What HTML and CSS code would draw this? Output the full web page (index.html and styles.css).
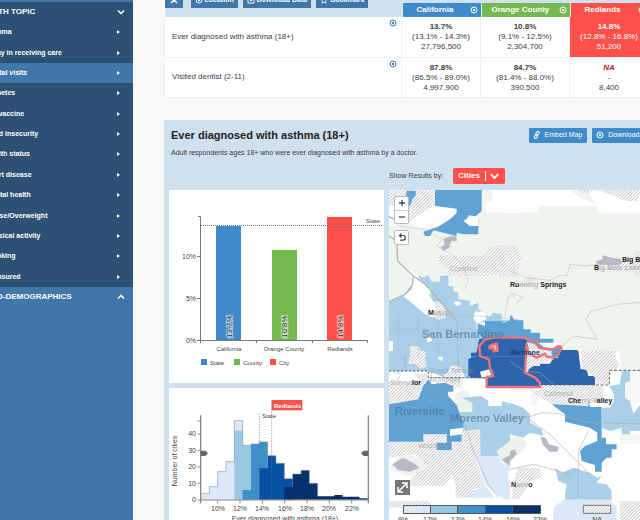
FILE: index.html
```html
<!DOCTYPE html>
<html lang="en">
<head>
<meta charset="utf-8">
<title>Health topics</title>
<link rel="stylesheet" href="styles.css">
</head>
<body>
<svg class="defs" aria-hidden="true">
  <defs>
    <pattern id="hatch" width="7" height="7" patternUnits="userSpaceOnUse" patternTransform="rotate(45)">
      <rect width="7" height="7" fill="#fbfbfb"/><rect width="2" height="7" fill="#bcbcbc"/>
    </pattern>
    <symbol id="target" viewBox="0 0 8 8"><circle cx="4" cy="4" r="3" fill="none" stroke="currentColor"/><circle cx="4" cy="4" r="1.2" fill="currentColor"/></symbol>
    <symbol id="close" viewBox="0 0 8 8"><circle cx="4" cy="4" r="3" fill="none" stroke="currentColor"/><path d="M2.8 2.8l2.4 2.4M5.2 2.8L2.8 5.2" stroke="currentColor"/></symbol>
    <symbol id="down" viewBox="0 0 8 8"><path d="M1 2.5l3 3 3-3" fill="none" stroke="currentColor" stroke-width="1.5"/></symbol>
    <symbol id="up" viewBox="0 0 8 8"><path d="M1 5.5l3-3 3 3" fill="none" stroke="currentColor" stroke-width="1.5"/></symbol>
  </defs>
</svg>
<div class="page">
  <nav class="sidebar">
    <button class="group group-open" type="button">HEALTH TOPIC <svg class="icon"><use href="#down"/></svg></button>
    <ul class="topics">
      <li><a href="#">Asthma</a></li>
      <li><a href="#">Delay in receiving care</a></li>
      <li><a class="active" href="#">Dental visits</a></li>
      <li><a href="#">Diabetes</a></li>
      <li><a href="#">Flu vaccine</a></li>
      <li><a href="#">Food insecurity</a></li>
      <li><a href="#">Health status</a></li>
      <li><a href="#">Heart disease</a></li>
      <li><a href="#">Mental health</a></li>
      <li><a href="#">Obese/Overweight</a></li>
      <li><a href="#">Physical activity</a></li>
      <li><a href="#">Smoking</a></li>
      <li><a href="#">Uninsured</a></li>
    </ul>
    <button class="group" type="button">SOCIO-DEMOGRAPHICS <svg class="icon"><use href="#up"/></svg></button>
  </nav>

  <main class="main">
    <table class="compare">
      <thead>
        <tr>
          <th class="tools-cell">
            <div class="tools">
              <button class="tool tool-icon" type="button" aria-label="Expand"><svg class="icon"><path d="M4 0v4M1 7l3-3 3 3" fill="none" stroke="currentColor" stroke-width="1.5"/></svg></button>
              <button class="tool" type="button"><svg class="icon"><use href="#target"/></svg>Location</button>
              <button class="tool" type="button"><svg class="icon"><path d="M1 4v3h6V4M4 0v5M2 3l2 2 2-2" fill="none" stroke="currentColor"/></svg>Download Data</button>
              <button class="tool" type="button"><svg class="icon"><path d="M4 1l1 2 2 .4-1.500 1.500.5 2.300L4 6 2 7.200l.5-2.300L1 3.400 3 3z" fill="none" stroke="currentColor" stroke-width=".8"/></svg>Bookmark</button>
            </div>
          </th>
          <th class="place"><div class="head state">California<svg class="icon"><use href="#close"/></svg></div></th>
          <th class="place wide"><div class="head county">Orange County<svg class="icon"><use href="#close"/></svg></div></th>
          <th class="place"><div class="head city">Redlands<svg class="icon"><use href="#close"/></svg></div></th>
        </tr>
      </thead>
      <tbody>
        <tr>
          <td class="topic"><div class="topic-row">Ever diagnosed with asthma (18+)<svg class="icon"><use href="#target"/></svg></div></td>
          <td><b>13.7%</b><br>(13.1% - 14.3%)<br>27,796,500</td>
          <td><b>10.8%</b><br>(9.1% - 12.5%)<br>2,304,700</td>
          <td class="city"><b>14.8%</b><br>(12.8% - 16.8%)<br>51,200</td>
        </tr>
        <tr>
          <td class="topic"><div class="topic-row">Visited dentist (2-11)<svg class="icon"><use href="#target"/></svg></div></td>
          <td><b>87.8%</b><br>(86.5% - 89.0%)<br>4,997,900</td>
          <td><b>84.7%</b><br>(81.4% - 88.0%)<br>390,500</td>
          <td><b class="na">NA</b><br>-<br>8,400</td>
        </tr>
      </tbody>
    </table>

    <section class="panel">
      <header class="panel-head">
        <h1>Ever diagnosed with asthma (18+)</h1>
        <div class="actions">
          <button class="action" type="button"><svg class="icon"><g fill="none" stroke="currentColor"><rect x="3.500" y=".5" width="2.500" height="4" rx="1.200" transform="rotate(35 5 2)"/><rect x="2" y="3.500" width="2.500" height="4" rx="1.200" transform="rotate(35 3 5)"/></g></svg>Embed Map</button>
          <button class="action" type="button"><svg class="icon"><use href="#target"/></svg>Download Map</button>
        </div>
      </header>
      <p class="lead">Adult respondents ages 18+ who were ever diagnosed with asthma by a doctor.</p>
      <div class="filter">
        <label for="level">Show Results by:</label>
        <div class="picker">
          <select id="level"><option>Cities</option><option>Counties</option></select>
          <svg class="icon"><use href="#down"/></svg>
        </div>
      </div>

      <div class="views">
        <div class="charts">
          <div class="card">
            <svg class="bars" role="img" aria-label="Rate by area">
              <rect x="47" y="36" width="25" height="114" fill="#3f8acb"/>
              <rect x="103" y="60" width="25" height="90" fill="#76b94f"/>
              <rect x="158" y="27" width="25" height="123" fill="#ff5149"/>
              <path d="M32 35.500H213" stroke="#777" stroke-dasharray="1 1"/>
              <path d="M29 26.500h2.500V153M28 66.500h4M28 108.500h4M28 150.500H198.500v2.500M87.500 150v3M143.500 150v3" fill="none" stroke="#777"/>
              <g class="tick end"><text x="27" y="69">10%</text><text x="27" y="111">5%</text><text x="27" y="153">0%</text></g>
              <g class="small mid"><text x="60" y="161">California</text><text x="115" y="161">Orange County</text><text x="171" y="161">Redlands</text></g>
              <g class="small"><text x="197" y="33">State</text><text x="41" y="175">State</text><text x="74" y="175">County</text><text x="110" y="175">City</text></g>
              <path d="M32 169h6v6h-6z" fill="#3f8acb"/><path d="M65 169h6v6h-6z" fill="#76b94f"/><path d="M101 169h6v6h-6z" fill="#ff5149"/>
              <g class="value"><text transform="translate(63 148) rotate(-90)">13.7%</text><text transform="translate(118 148) rotate(-90)">10.8%</text><text transform="translate(174 148) rotate(-90)">14.8%</text></g>
            </svg>
          </div>
          <div class="card">
            <svg class="histogram" role="img" aria-label="Distribution across cities">
              <g transform="translate(-4 -8) scale(.33333)">
                <path d="M108 359V340H133V320H158V275H183V245H208V122H233V196H258V359z" fill="#dce8f7"/>
                <path d="M208 359V152H233V196H258V359z" fill="#9ac7e1"/>
                <path d="M233 359V330H258V192H283V186H308V359z" fill="#3d90ca"/>
                <path d="M283 359V265H308V227H333V250H358V296H383V359z" fill="#0651a3"/>
                <path d="M358 359V321H383V282H408V271H433V310H458V349H508V345H533V350H583V355H608V359z" fill="#08306d"/>
                <path d="M108 340H133V320H158V275H183V245H208V122H233V196H258V192H283V186H308V227H333V250H358V296H383V282H408V271H433V310H458V349" fill="none" stroke="#8799aa" stroke-width="2"/>
                <path d="M283 100V359M320 62V359" stroke="#777" stroke-width="2" stroke-dasharray="4 4"/>
                <path d="M107 106V370M610 106V370" stroke="#888" stroke-width="4"/>
                <path d="M98 360H610M98 310h10M98 261h10M98 211h10M98 162h10M98 123h10M158 360v10M225 360v10M292 360v10M359 360v10M426 360v10M493 360v10M560 360v10" stroke="#888" stroke-width="3"/>
                <path d="M107 212h14l8 8-8 8h-14zM610 212h-14l-8 8 8 8h14z" fill="#666"/>
                <path d="M320 60h92v31h-92z" fill="#ff5149"/>
              </g>
              <g class="tick end"><text x="27" y="114">0</text><text x="27" y="98">10</text><text x="27" y="81">20</text><text x="27" y="65">30</text><text x="27" y="48">40</text></g>
              <g class="tick mid"><text x="49" y="123">10%</text><text x="71" y="123">12%</text><text x="93" y="123">14%</text><text x="116" y="123">16%</text><text x="138" y="123">18%</text><text x="160" y="123">20%</text><text x="183" y="123">22%</text><text x="116" y="133">Ever diagnosed with asthma (18+)</text><text transform="translate(8 73) rotate(-90)">Number of cities</text></g>
              <text class="small" x="93" y="30">State</text>
              <text class="flag" x="105" y="20">Redlands</text>
            </svg>
          </div>
        </div>

        <div class="map">
          <svg class="map-canvas" role="img" aria-label="Map of rates by city">
            <rect width="100%" height="100%" fill="#f0f4ef"/>
            <!-- south west -->
            <g transform="translate(-4 161) scale(.33333)">
              <path d="M0 0H400V540H0z" fill="#fff"/>
              <path d="M0 0H400V85H320L240 80 230 55 200 45 180 80 130 60H0z" fill="#a9d0e8"/>
              <path d="M205 130L245 115 262 150 265 182 222 182z" fill="#edf2ea"/>
              <path d="M230 140L290 135 310 150V165H350V150L400 165V315H285V240H235L225 183H262V155z" fill="#a9d0e8"/>
              <path d="M75 0H120V25L125 45 108 55 92 40 70 38zM12 62H60L125 70 130 90 100 145 12 160zM175 75L210 43 230 50V112L205 105zM12 273H115V250H183V275H155V297H200V275L230 272V240L285 235 287 315 270 318 285 360 300 405 265 415 285 440H212V400L200 370 180 405H60L100 360 130 345 90 310 12 320zM12 450H130L150 470H12z" fill="url(#hatch)"/>
              <path d="M12 160L100 145 115 105 130 85 140 100 180 95 205 105V122L188 122 190 135 215 162 235 215V230L195 235V255L230 250V272H200V297H155V275H185V250H115V272H12z" fill="#5fa2d3"/>
              <path d="M272 315H385L370 370V385L400 400V445H355L300 400 285 350zM265 420L300 405 330 440H265z" fill="#dce8f7"/>
              <path d="M155 8h18v22l-13-5zM50 65l30-5 20 25-30 10-30-5zM12 62l30 8-10 20H12z" fill="#fff"/>
              <path d="M15 345L55 305 110 325 130 345 80 375 20 360zM335 300L375 270H400V350L350 340z" fill="#edf2ea"/>
              <path d="M22 340l32-20 30 15 20 15-30 12-35-5zM350 325l45-22v35l-25 5z" fill="#b9b9c6"/>
              <path d="M250 75V25L283 5V0H400V108H305V80L288 78 285 62 310 55 320 72 300 80H262z" fill="#2c64ad"/>
              <path d="M285 62L312 55 320 75 290 80z" fill="#fff"/>
              <path d="M12 255L100 200 135 120 140 60M135 120L190 150 240 220 265 300 310 400 340 440M60 160L200 180M60 0V50M220 0V60" fill="none" stroke="#7d98ae" stroke-opacity=".45" stroke-width="3"/>
              <path d="M12 60H130V80H305" fill="none" stroke="#555" stroke-width="3" stroke-dasharray="7 5"/>
            </g>
            <!-- south east -->
            <g transform="translate(121 161) scale(.33333)">
              <path d="M0 0H330V60H450V540H0z" fill="#fff"/>
              <path d="M0 108H90L45 125 0 120zM340 60H450V155H340zM65 125h20v40H65zM300 210h60v30h-60zM330 250h60v30h-60z" fill="#f4f7f3"/>
              <path d="M0 0H45V60L80 78 90 106H0zM52 70L58 45H90V38H120L130 20H145V0H205L212 55H230L235 75H255V102H90L80 78z" fill="#2c64ad"/>
              <path d="M50 0H148L130 25 95 38 70 45 50 60zM212 0H320L315 20 328 40 322 60H298V100H260L255 80 232 60 215 50zM52 110L85 120 90 105H280V150L215 163 180 175 130 160 90 140zM22 350H90L95 380 60 390 45 420 25 445H5L10 400zM330 450H450V520H330z" fill="url(#hatch)"/>
              <path d="M125 160L235 165 237 155 240 168H275V260H288V280H320V295H305V320H290L275 335V362H255V342L215 330 210 300 225 285 262 270V245L240 230 205 222 165 212V190L145 175z" fill="#5fa2d3"/>
              <path d="M275 170H300L312 150V130L298 105 330 100 335 60H360V90L345 95V140L360 150 370 188 400 150H420V240H360V250H335V230L300 240 275 230zM0 155L40 170 60 190V215L95 235 100 255 60 245 40 260 0 250zM135 350L155 365 190 350 240 365 262 380 275 375 260 395 290 400 305 420V446H165V430L170 400 145 390z" fill="#a9d0e8"/>
              <path d="M160 446H300L320 470V520H130V470z" fill="#dce8f5"/>
              <path d="M0 260L35 260 50 275 35 305 0 330z" fill="#edf2ea"/>
              <path d="M92 258l15 2 10 20 30 8-5 14H118l-20-22zM0 300l15-5 5 15-20 20z" fill="#b9b9c6"/>
              <path d="M0 200L60 197 95 185 140 187 235 215 450 220M45 197L120 250 160 290 200 330 240 370M0 355L70 340 180 370 205 350V440M205 350V300L235 240M0 30L40 60 90 65 130 100" fill="none" stroke="#a9adb0" stroke-opacity=".6" stroke-width="3"/>
              <path d="M90 102H298V58H450" fill="none" stroke="#666" stroke-width="3" stroke-dasharray="9 5"/>
            </g>
            <!-- north west -->
            <g transform="translate(-4 -4) scale(.33333)">
              <path d="M100 268L115 275 130 268 140 287H165V270L190 268V300L205 302V315L220 320V340L255 345V360L280 350V370L310 395 325 380 350 385V402L400 400V512H0V350L55 330z" fill="#a9d0e8"/>
              <path d="M12 14H150V50L120 80 72 115 65 100 12 90z" fill="url(#hatch)"/>
              <path d="M65 14H92V28L82 40 75 60 62 45z" fill="#5fa2d3"/>
              <path d="M12 60H35V120H12zM150 58L225 62 215 80 195 98 165 118 110 127 70 110 100 88zM325 12H400V80H300L305 48 320 45z" fill="#fff"/>
              <path d="M150 12H290V75L272 90 280 97V145H235L215 140V150L145 133 135 150H120L115 137 160 122 195 100 215 80V68L150 60z" fill="#5fa2d3"/>
              <path d="M235 105L245 98 252 88 280 92 280 120H255z" fill="#fff"/>
              <path d="M162 208L290 210 312 195V182L345 176 400 182V272L340 273V263L300 270H190V248L162 235zM140 350L160 345 180 365 182 395 160 402 140 385z" fill="url(#hatch)"/>
              <path d="M175 158l20-7h18l3 13-18 2-5 20-18 8-8-10 12-8z" fill="#b9b9c6"/>
              <path d="M62 245L100 265 105 288 130 322 150 355 145 395 120 385 85 355 55 330 80 310 82 275zM95 285l12-4 30 35v12zM205 348l15-3 10 10-15 6zM270 375l30 5 5 20-30 12-10-15zM275 410l25-2v15l-25 8zM125 455l12-5 5 14-15 4zM12 465h12v30H12z" fill="#fff"/>
              <path d="M75 480h25l8 15h14v17H75z" fill="url(#hatch)"/>
              <path d="M278 440V412L300 420V405H350L352 412 370 405H400V460H300z" fill="#5fa2d3"/>
              <path d="M282 460L300 456H400V512H272z" fill="#2c64ad"/>
              <path d="M258 512V500H280V512z" fill="#2c64ad"/>
              <path d="M12 150L35 165 38 225 85 270 120 295 170 350 215 405M85 270L82 300 60 325 12 347M12 92L38 105" fill="none" stroke="#b4b4b4" stroke-width="4"/>
              <path d="M40 120L120 130 170 160 155 180 200 205 230 230 250 280 240 310M160 390H290L390 400M218 390V510M360 390L370 330 390 330M12 430H280M100 380V510M40 380V510M160 400V510" fill="none" stroke="#aab8bf" stroke-opacity=".45" stroke-width="3"/>
            </g>
            <!-- north east -->
            <g transform="translate(121 -4) scale(.33333)">
              <path d="M0 12H450V82H262V60H85V80H0z" fill="#fff"/>
              <path d="M180 14H230L260 55 220 40z" fill="#f0f4ef"/>
              <path d="M205 12H245L240 22H210zM260 12H450V30L385 25V45H350L300 25zM0 190L20 195V210L38 215 25 230V248L10 262 0 270zM330 232L370 228V195L450 185V280L375 272 370 257 285 255 290 240zM30 288L60 268 75 280 70 300 30 302z" fill="url(#hatch)"/>
              <path d="M258 226l20-6V208l30 8 22 2 8 12-15 8-60-2z" fill="#b9b9c6"/>
              <path d="M0 390L5 388 12 403H40V430H62V440H90V458H130V470L155 480 150 512H0z" fill="#5fa2d3"/>
              <path d="M0 457H45L60 475 85 480V512H0zM150 492H202V512H130z" fill="#2c64ad"/>
              <path d="M85 470H150V482L110 490z" fill="#fff"/>
              <path d="M50 468L75 475 90 490 125 495V512H48zM260 488L285 490 320 512H250z" fill="url(#hatch)"/>
              <path d="M0 255L50 275 120 283 145 270 172 268 180 235 225 240 262 235M0 320L40 335 20 350M450 345L320 355 240 378 228 400 262 460 190 450 155 480" fill="none" stroke="#d2d2cc" stroke-width="3"/>
            </g>
            <!-- selected city outline -->
            <g transform="translate(-4 -4) scale(.33333)" fill="none" stroke="#ef7378" stroke-width="7" stroke-linejoin="round">
              <path d="M283 495V480L300 460 330 455H420L428 462 455 465 462 485 505 490 520 480 530 485 520 505 505 515 485 512 480 503 455 515 430 500 425 475 420 560 450 575 465 590V603H305V573L325 570 315 545 312 520 285 510V490"/>
              <path d="M313 480l22-8 3 22-12 2v-10l-12 2z" fill="#fbb"/>
            </g>
            <g class="area"><text x="33" y="148">San Bernardino</text><text x="6" y="225">Riverside</text><text x="61" y="232">Moreno Valley</text></g>
            <g class="faint"><text x="61" y="81">Crestline</text><text x="40" y="183">Grand Terrace</text><text x="40" y="192">Highgrove</text><text x="29" y="258">Woodcrest</text><text x="155" y="206">Calimesa</text><text x="1" y="195">Sunnys</text></g>
            <g class="town"><text x="39" y="125">M<tspan class="dim">uscoy</tspan></text><text x="121" y="97">Ru<tspan class="dim">nning</tspan> Springs</text><text x="233" y="72">Big Bear City</text><text x="205" y="80">B<tspan class="dim">ig Bear Lake</tspan></text><text class="muted" x="122" y="165">Mentone</text><text x="179" y="213">Che<tspan class="dim">rry V</tspan>alley</text><text x="122" y="297">N<tspan class="dim">uev</tspan>o</text><text x="23" y="195">lor</text></g>
            <g stroke="#555" stroke-width="1"><path d="M14.500 315.500h27v8h-27z" fill="#dce8f7"/><path d="M41.500 315.500h27v8h-27z" fill="#9ac7e1"/><path d="M68.500 315.500h28v8h-28z" fill="#3d90ca"/><path d="M96.500 315.500h27v8h-27z" fill="#0651a3"/><path d="M123.500 315.500h28v8h-28z" fill="#08306d"/></g>
            <g transform="translate(194 315) scale(.33333)"><path d="M1 1H83V25H1z" fill="url(#hatch)" stroke="#777" stroke-width="3"/></g>
            <g class="tick mid"><text x="14" y="332">9%</text><text x="41" y="332">12%</text><text x="69" y="332">13%</text><text x="96" y="332">14%</text><text x="124" y="332">16%</text><text x="151" y="332">23%</text><text x="208" y="332">NA</text></g>
          </svg>
          <div class="map-tools">
            <div class="zoom">
              <button type="button" aria-label="Zoom in"><svg class="icon"><path d="M1 4h6M4 1v6" stroke="#444" stroke-width="1.300"/></svg></button>
              <button type="button" aria-label="Zoom out"><svg class="icon"><path d="M1 4h6" stroke="#444" stroke-width="1.300"/></svg></button>
            </div>
            <div class="zoom"><button type="button" aria-label="Reset"><svg class="icon"><path d="M1.500 2.500H5a2.300 2.300 0 010 4.600H2M3.500.5l-2 2 2 2" fill="none" stroke="#444" stroke-width="1.200"/></svg></button></div>
          </div>
          <button class="expand" type="button" aria-label="Full screen"><svg width="13" height="13"><path d="M3 10l7-7M6 2h5v5M2 6v5h5" fill="none" stroke="#fff" stroke-width="1.500"/></svg></button>
        </div>
      </div>
    </section>
  </main>
</div>
</body>
</html>
```
FILE: styles.css
```css
* { box-sizing: border-box; }

body {
  margin: 0;
  height: 100vh;
  overflow: hidden;
  background: #f8f8f8;
  color: #3c3c3c;
  font: 8px/10px "Liberation Sans", Arial, sans-serif;
}

button, select {
  margin: 0;
  padding: 0;
  border: 0;
  font: inherit;
  color: inherit;
  background: none;
}

.defs { position: absolute; width: 0; height: 0; }
.icon { width: 8px; height: 8px; flex: none; }

.page {
  display: flex;
  min-height: 100vh;
  overflow: hidden;
}

/* Sidebar */
.sidebar {
  flex: none;
  width: 163px;
  margin-left: -30px;
  padding-top: 2px;
  background: #4076a9;
  color: #fff;
  font-weight: bold;
}

.group {
  display: flex;
  align-items: center;
  justify-content: space-between;
  width: 100%;
  height: 20px;
  padding: 0 8px 0 7px;
  font-weight: bold;
}

.group-open { background: #2d5174; }

.topics {
  display: grid;
  grid-auto-rows: 1fr;
  height: 265px;
  margin: 0;
  padding: 0;
  list-style: none;
  background: #2d5174;
  font-size: 7px;
}

.topics a {
  display: flex;
  align-items: center;
  justify-content: space-between;
  height: 100%;
  padding: 0 13px 0 16px;
  color: #fff;
  text-decoration: none;
}

.topics a::after {
  content: "";
  border: 2px solid transparent;
  border-left: 3px solid #fff;
  border-right: 0;
}

.topics .active { background: #4076a9; }

/* Comparison table */
.main {
  flex: 1;
  min-width: 0;
  margin: -8px -28px 0 31px;
}

.compare {
  width: calc(100% - 19px);
  table-layout: fixed;
  border-collapse: collapse;
  background: #fff;
  text-align: center;
}

.compare thead { background: #cfe0ee; }
.compare th { height: 25px; padding: 0; }
.compare .tools-cell { vertical-align: top; }
.place { width: 79px; vertical-align: bottom; }
.place.wide { width: 89px; }

.tools { display: flex; gap: 5px; }

.tool {
  display: flex;
  align-items: center;
  gap: 2px;
  height: 16px;
  padding: 0 4px;
  background: #4076a9;
  color: #fff;
  font-size: 7px;
  white-space: nowrap;
}

.tool-icon { margin-right: 3px; padding: 0 5px; }

.head {
  display: flex;
  align-items: center;
  height: 14px;
  padding: 0 3px 0 14px;
  color: #fff;
  border-left: 1px solid #e4edf4;
}

.head .icon { margin-left: auto; }
.wide .head { padding-left: 10px; }
.state { background: #3f8acb; }
.county { background: #76b94f; }
.city { background: #ff5149; color: #fff; }

.compare td {
  height: 40px;
  padding: 1px 0 0;
  border: 1px solid #f0f0f0;
  border-top: 0;
}

.compare .topic { padding: 0; text-align: left; }

.topic-row {
  display: flex;
  align-items: center;
  justify-content: space-between;
  height: 39px;
  padding: 0 4px 0 7px;
}

.topic-row .icon {
  align-self: flex-start;
  margin-top: 2px;
  color: #4076a9;
}

.na { color: #b22222; font-style: italic; }

/* Detail panel */
.panel {
  margin-top: 22px;
  padding: 8px 5px;
  background: #cfe0ee;
}

.panel-head {
  display: flex;
  align-items: center;
  justify-content: space-between;
  padding: 0 3px 0 2px;
}

h1 {
  margin: 0;
  color: #222;
  font-size: 11px;
  line-height: 15px;
}

.actions { display: flex; gap: 5px; }

.action {
  display: flex;
  align-items: center;
  gap: 4px;
  height: 15px;
  padding: 0 5px 0 4px;
  border-radius: 1px;
  background: #3f8acb;
  color: #fff;
  font-size: 7px;
}

.lead { margin: 5px 2px 10px; font-size: 7px; }

.filter {
  display: flex;
  align-items: center;
  gap: 10px;
  margin-left: 220px;
  font-size: 7px;
}

.picker {
  position: relative;
  display: flex;
  border-radius: 2px;
  background: #ff5149;
  color: #fff;
}

.picker select {
  width: 52px;
  height: 16px;
  padding: 0 5px;
  appearance: none;
  font-size: 8px;
  font-weight: bold;
}

.picker .icon {
  position: absolute;
  top: 3px;
  right: 2px;
  width: 18px;
  height: 10px;
  border-left: 1px solid #fff;
  pointer-events: none;
}

.views {
  display: grid;
  grid-template-columns: 215px 1fr;
  gap: 5px;
  margin-top: 6px;
}

.charts { display: grid; align-content: start; gap: 5px; }
.card { background: #fff; }
.card svg, .map-canvas { display: block; width: 100%; }
.bars { height: 193px; }
.histogram { height: 140px; }

text { fill: #444; }
.small { font-size: 6px; }
.tick { font-size: 7px; }
.end { text-anchor: end; }
.mid { text-anchor: middle; }

.value text {
  fill: #333;
  stroke: #fff;
  stroke-width: 2px;
  stroke-opacity: .6;
  paint-order: stroke;
}

.flag { fill: #fff; font-size: 6px; font-weight: bold; }

/* Map */
.map { position: relative; }
.map-canvas { height: 340px; }
.area text { fill: #4f7590; fill-opacity: .65; font-size: 11px; font-weight: bold; }
.faint text { fill: #8d9499; fill-opacity: .7; font-size: 7px; }
.town text { fill: #222; font-size: 7px; font-weight: bold; }
.town .dim { fill: #b5b5b5; }
.town .muted { fill: #1b4173; }

.map-tools {
  position: absolute;
  top: 6px;
  left: 5px;
  display: grid;
  gap: 6px;
}

.zoom {
  display: grid;
  border: 1px solid #bbb;
  border-radius: 2px;
  background: #fff;
}

.zoom button {
  display: grid;
  place-items: center;
  width: 13px;
  height: 13px;
}

.zoom button + button { border-top: 1px solid #ccc; }

.expand {
  position: absolute;
  top: 290px;
  left: 6px;
  display: grid;
  place-items: center;
  width: 15px;
  height: 15px;
  background: #757575;
}
```
